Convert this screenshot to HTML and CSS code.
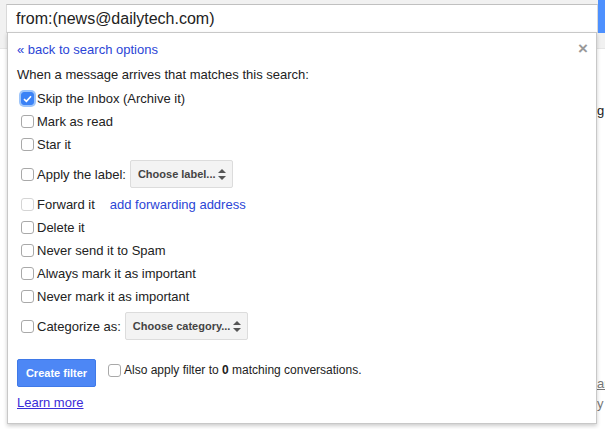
FILE: index.html
```html
<!DOCTYPE html>
<html>
<head>
<meta charset="utf-8">
<link rel="stylesheet" href="styles.css">
</head>
<body>
<div class="page">
  <div class="topband">
    <div class="searchbtn"></div>
  </div>
  <div class="bgcontent">
    <div class="bg-g">g</div>
    <div class="bg-ar">ar</div>
    <div class="bg-y">y</div>
  </div>
</div>

<div class="searchbox">from:(news@dailytech.com)</div>

<div class="panel">
  <div class="panel-head">
    <a class="link" href="#">« back to search options</a>
    <span class="close">×</span>
  </div>
  <div class="intro">When a message arrives that matches this search:</div>

  <label class="row"><span class="cb checked"><svg width="9" height="8" viewBox="0 0 9 8"><path d="M1 4.2 L3.4 6.4 L8 1.2" fill="none" stroke="#fff" stroke-width="1.6"/></svg></span>Skip the Inbox (Archive it)</label>
  <label class="row"><span class="cb"></span>Mark as read</label>
  <label class="row"><span class="cb"></span>Star it</label>
  <label class="row row-select"><span class="cb"></span>Apply the label:<span class="select sel-label">Choose label...<span class="arrows"></span></span></label>
  <label class="row row-fwd"><span class="cb disabled"></span>Forward it<a class="link fwd" href="#">add forwarding address</a></label>
  <label class="row"><span class="cb"></span>Delete it</label>
  <label class="row"><span class="cb"></span>Never send it to Spam</label>
  <label class="row"><span class="cb"></span>Always mark it as important</label>
  <label class="row"><span class="cb"></span>Never mark it as important</label>
  <label class="row row-select"><span class="cb"></span>Categorize as:<span class="select sel-cat">Choose category...<span class="arrows"></span></span></label>

  <div class="actions">
    <button class="create">Create filter</button>
    <label class="row also"><span class="cb"></span>Also apply filter to&nbsp;<b>0</b>&nbsp;matching conversations.</label>
  </div>
  <a class="learn" href="#">Learn more</a>
</div>
</body>
</html>
```
FILE: styles.css
```css
* { box-sizing: border-box; }
html, body { margin: 0; padding: 0; }
body {
  width: 605px;
  height: 429px;
  overflow: hidden;
  font-family: "Liberation Sans", Arial, sans-serif;
  font-size: 13px;
  color: #222;
  background: #fff;
  position: relative;
}
.page { width: 605px; height: 429px; }
.topband {
  height: 49px;
  background: #f1f1f1;
  border-bottom: 1px solid #e5e5e5;
  display: flex;
  justify-content: flex-end;
  align-items: flex-start;
}
.searchbtn {
  width: 7px;
  height: 33px;
  background: #4d90fe;
}
.bgcontent {
  padding-left: 597px;
  font-size: 13px;
  color: #222;
}
.bg-g { margin-top: 54px; height: 20px; }
.bg-ar { margin-top: 253px; color: #777; text-decoration: underline; height: 20px; }
.bg-y { margin-top: 0; color: #777; }

.searchbox {
  position: absolute;
  left: 6px;
  top: 4px;
  width: 592px;
  height: 29px;
  background: #fff;
  border: 1px solid #d9d9d9;
  border-top-color: #c0c0c0;
  font-size: 16px;
  color: #222;
  padding: 5px 0 0 9px;
}

.panel {
  position: absolute;
  left: 7px;
  top: 32px;
  width: 590px;
  height: 392px;
  background: #fff;
  border: 1px solid #c8c8c8;
  box-shadow: 0 2px 4px rgba(0,0,0,0.2);
  padding: 7px 0 0 9px;
}
.panel-head {
  display: flex;
  justify-content: space-between;
  align-items: center;
  height: 19px;
  padding-right: 8px;
}
.link { color: #2b45d6; text-decoration: none; }
.close { color: #999; font-size: 17px; font-weight: bold; line-height: 1; margin-top: -3px; }
.intro { margin-top: 8px; height: 20px; }

.row {
  display: flex;
  align-items: center;
  height: 23px;
  padding-left: 4px;
}
.cb {
  width: 13px;
  height: 13px;
  border: 1px solid #a9a9a9;
  border-radius: 3px;
  margin-right: 3px;
  background: #fff;
  display: inline-flex;
  align-items: center;
  justify-content: center;
  flex: none;
}
.cb.checked {
  background: #3b82f6;
  border-color: #3b82f6;
  box-shadow: 0 0 0 2px #9ec5fa;
}
.cb.disabled { border-color: #d5d5d5; }
.row-select { height: 30px; margin-top: 3px; margin-bottom: 3px; }
.row-fwd { margin-top: 4px; }
.fwd { margin-left: 15px; }
.select {
  display: inline-flex;
  align-items: center;
  height: 28px;
  margin-left: 4px;
  padding: 0 0 0 7px;
  background: #f3f3f3;
  border: 1px solid #dcdcdc;
  border-radius: 2px;
  font-size: 11px;
  font-weight: bold;
  color: #444;
  position: relative;
}
.sel-label { width: 103px; }
.sel-cat { width: 123px; }
.arrows {
  position: absolute;
  right: 6px;
  top: 8px;
  width: 8px;
  height: 11px;
}
.arrows::before, .arrows::after {
  content: "";
  position: absolute;
  left: 0;
  border-left: 4px solid transparent;
  border-right: 4px solid transparent;
}
.arrows::before { top: 0; border-bottom: 4px solid #555; }
.arrows::after { bottom: 0; border-top: 4px solid #555; }

.actions {
  display: flex;
  align-items: flex-start;
  margin-top: 18px;
}
.create {
  width: 79px;
  height: 28px;
  background: #4d87f5;
  border: 1px solid #3f79e8;
  border-radius: 2px;
  color: #fff;
  font-family: "Liberation Sans", Arial, sans-serif;
  font-size: 11px;
  font-weight: bold;
  padding: 0;
}
.also { margin-left: 9px; height: 16px; padding-left: 3px; margin-top: 3px; font-size: 12px; }
.also b { font-weight: bold; }
.learn {
  display: inline-block;
  margin-top: 8px;
  color: #3b2bd8;
  text-decoration: underline;
}
```
